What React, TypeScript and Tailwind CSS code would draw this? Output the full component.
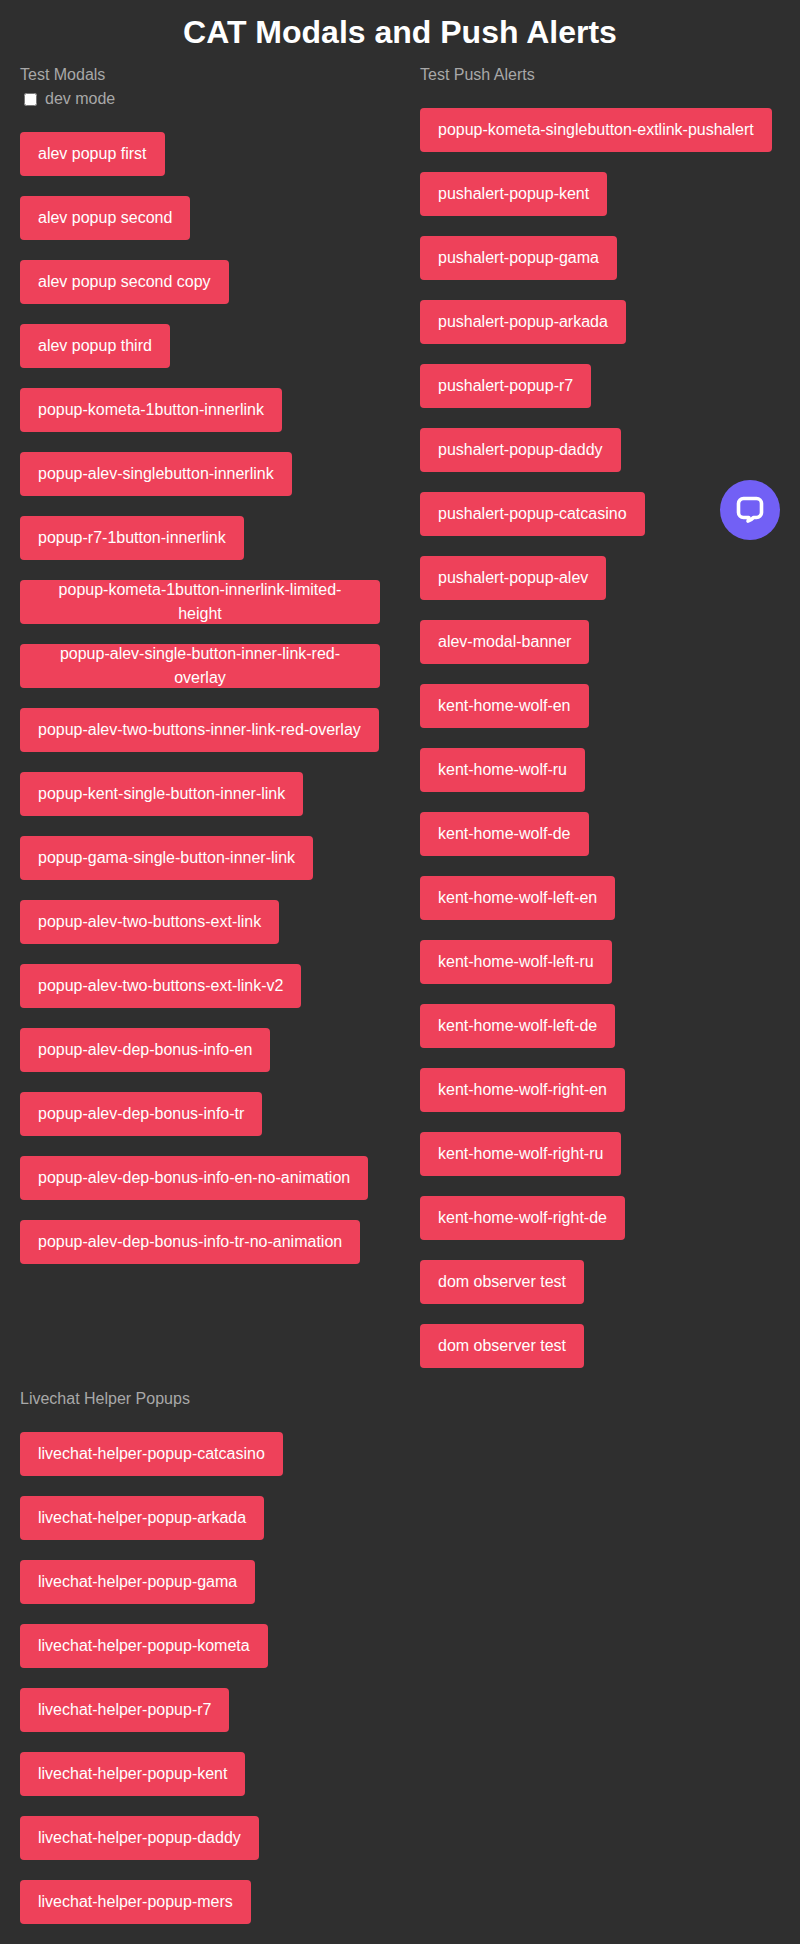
const testModals = [
  "alev popup first",
  "alev popup second",
  "alev popup second copy",
  "alev popup third",
  "popup-kometa-1button-innerlink",
  "popup-alev-singlebutton-innerlink",
  "popup-r7-1button-innerlink",
  "popup-kometa-1button-innerlink-limited-height",
  "popup-alev-single-button-inner-link-red-overlay",
  "popup-alev-two-buttons-inner-link-red-overlay",
  "popup-kent-single-button-inner-link",
  "popup-gama-single-button-inner-link",
  "popup-alev-two-buttons-ext-link",
  "popup-alev-two-buttons-ext-link-v2",
  "popup-alev-dep-bonus-info-en",
  "popup-alev-dep-bonus-info-tr",
  "popup-alev-dep-bonus-info-en-no-animation",
  "popup-alev-dep-bonus-info-tr-no-animation",
];

const pushAlerts = [
  "popup-kometa-singlebutton-extlink-pushalert",
  "pushalert-popup-kent",
  "pushalert-popup-gama",
  "pushalert-popup-arkada",
  "pushalert-popup-r7",
  "pushalert-popup-daddy",
  "pushalert-popup-catcasino",
  "pushalert-popup-alev",
  "alev-modal-banner",
  "kent-home-wolf-en",
  "kent-home-wolf-ru",
  "kent-home-wolf-de",
  "kent-home-wolf-left-en",
  "kent-home-wolf-left-ru",
  "kent-home-wolf-left-de",
  "kent-home-wolf-right-en",
  "kent-home-wolf-right-ru",
  "kent-home-wolf-right-de",
  "dom observer test",
  "dom observer test",
];

const livechatPopups = [
  "livechat-helper-popup-catcasino",
  "livechat-helper-popup-arkada",
  "livechat-helper-popup-gama",
  "livechat-helper-popup-kometa",
  "livechat-helper-popup-r7",
  "livechat-helper-popup-kent",
  "livechat-helper-popup-daddy",
  "livechat-helper-popup-mers",
];

function PopupButton({ label }: { label: string }) {
  return (
    <button className="flex h-11 max-w-[360px] items-center justify-center rounded bg-[#ee415a] px-[18px] text-center text-base leading-6 text-white">
      {label}
    </button>
  );
}

export default function App() {
  return (
    <div className="relative h-[1944px] bg-[#2f2f2f] px-5 font-['Liberation_Sans',Arial,sans-serif]">
      <h1 className="pt-[14px] text-center text-[32px] font-bold leading-[37px] text-white">
        CAT Modals and Push Alerts
      </h1>

      <div className="mt-[15px] grid grid-cols-[400px_1fr]">
        {/* Test modals */}
        <div>
          <p className="text-base leading-[18px] text-[#a8a8a8]">Test Modals</p>
          <label className="mt-[6px] flex h-[18px] items-center text-base text-[#a8a8a8]">
            <input type="checkbox" className="ml-1 mr-2 h-[13px] w-[13px]" />
            dev mode
          </label>
          <div className="mt-[24px] flex flex-col items-start gap-5">
            {testModals.map((label) => (
              <PopupButton key={label} label={label} />
            ))}
          </div>
        </div>

        {/* Push alerts */}
        <div>
          <p className="text-base leading-[18px] text-[#a8a8a8]">Test Push Alerts</p>
          <div className="mt-[24px] flex flex-col items-start gap-5">
            {pushAlerts.map((label, i) => (
              <PopupButton key={i} label={label} />
            ))}
          </div>
        </div>
      </div>

      {/* Livechat helpers */}
      <p className="mt-[22px] text-base leading-[18px] text-[#a8a8a8]">Livechat Helper Popups</p>
      <div className="mt-[24px] flex flex-col items-start gap-5">
        {livechatPopups.map((label) => (
          <PopupButton key={label} label={label} />
        ))}
      </div>

      <div className="absolute left-[720px] top-[480px] flex h-[60px] w-[60px] items-center justify-center rounded-full bg-[#7260f5]">
        <svg width="28" height="28" viewBox="0 0 28 28" fill="none">
          <path
            d="M7.5 2.5h13a5 5 0 0 1 5 5v9a5 5 0 0 1-5 5h-3c-1.600 1.800-3.300 3-5.500 3.600.7-1.100.9-2.300.8-3.600H7.500a5 5 0 0 1-5-5v-9a5 5 0 0 1 5-5Z"
            stroke="#fff"
            strokeWidth="3.6"
            strokeLinejoin="round"
          />
        </svg>
      </div>
    </div>
  );
}
